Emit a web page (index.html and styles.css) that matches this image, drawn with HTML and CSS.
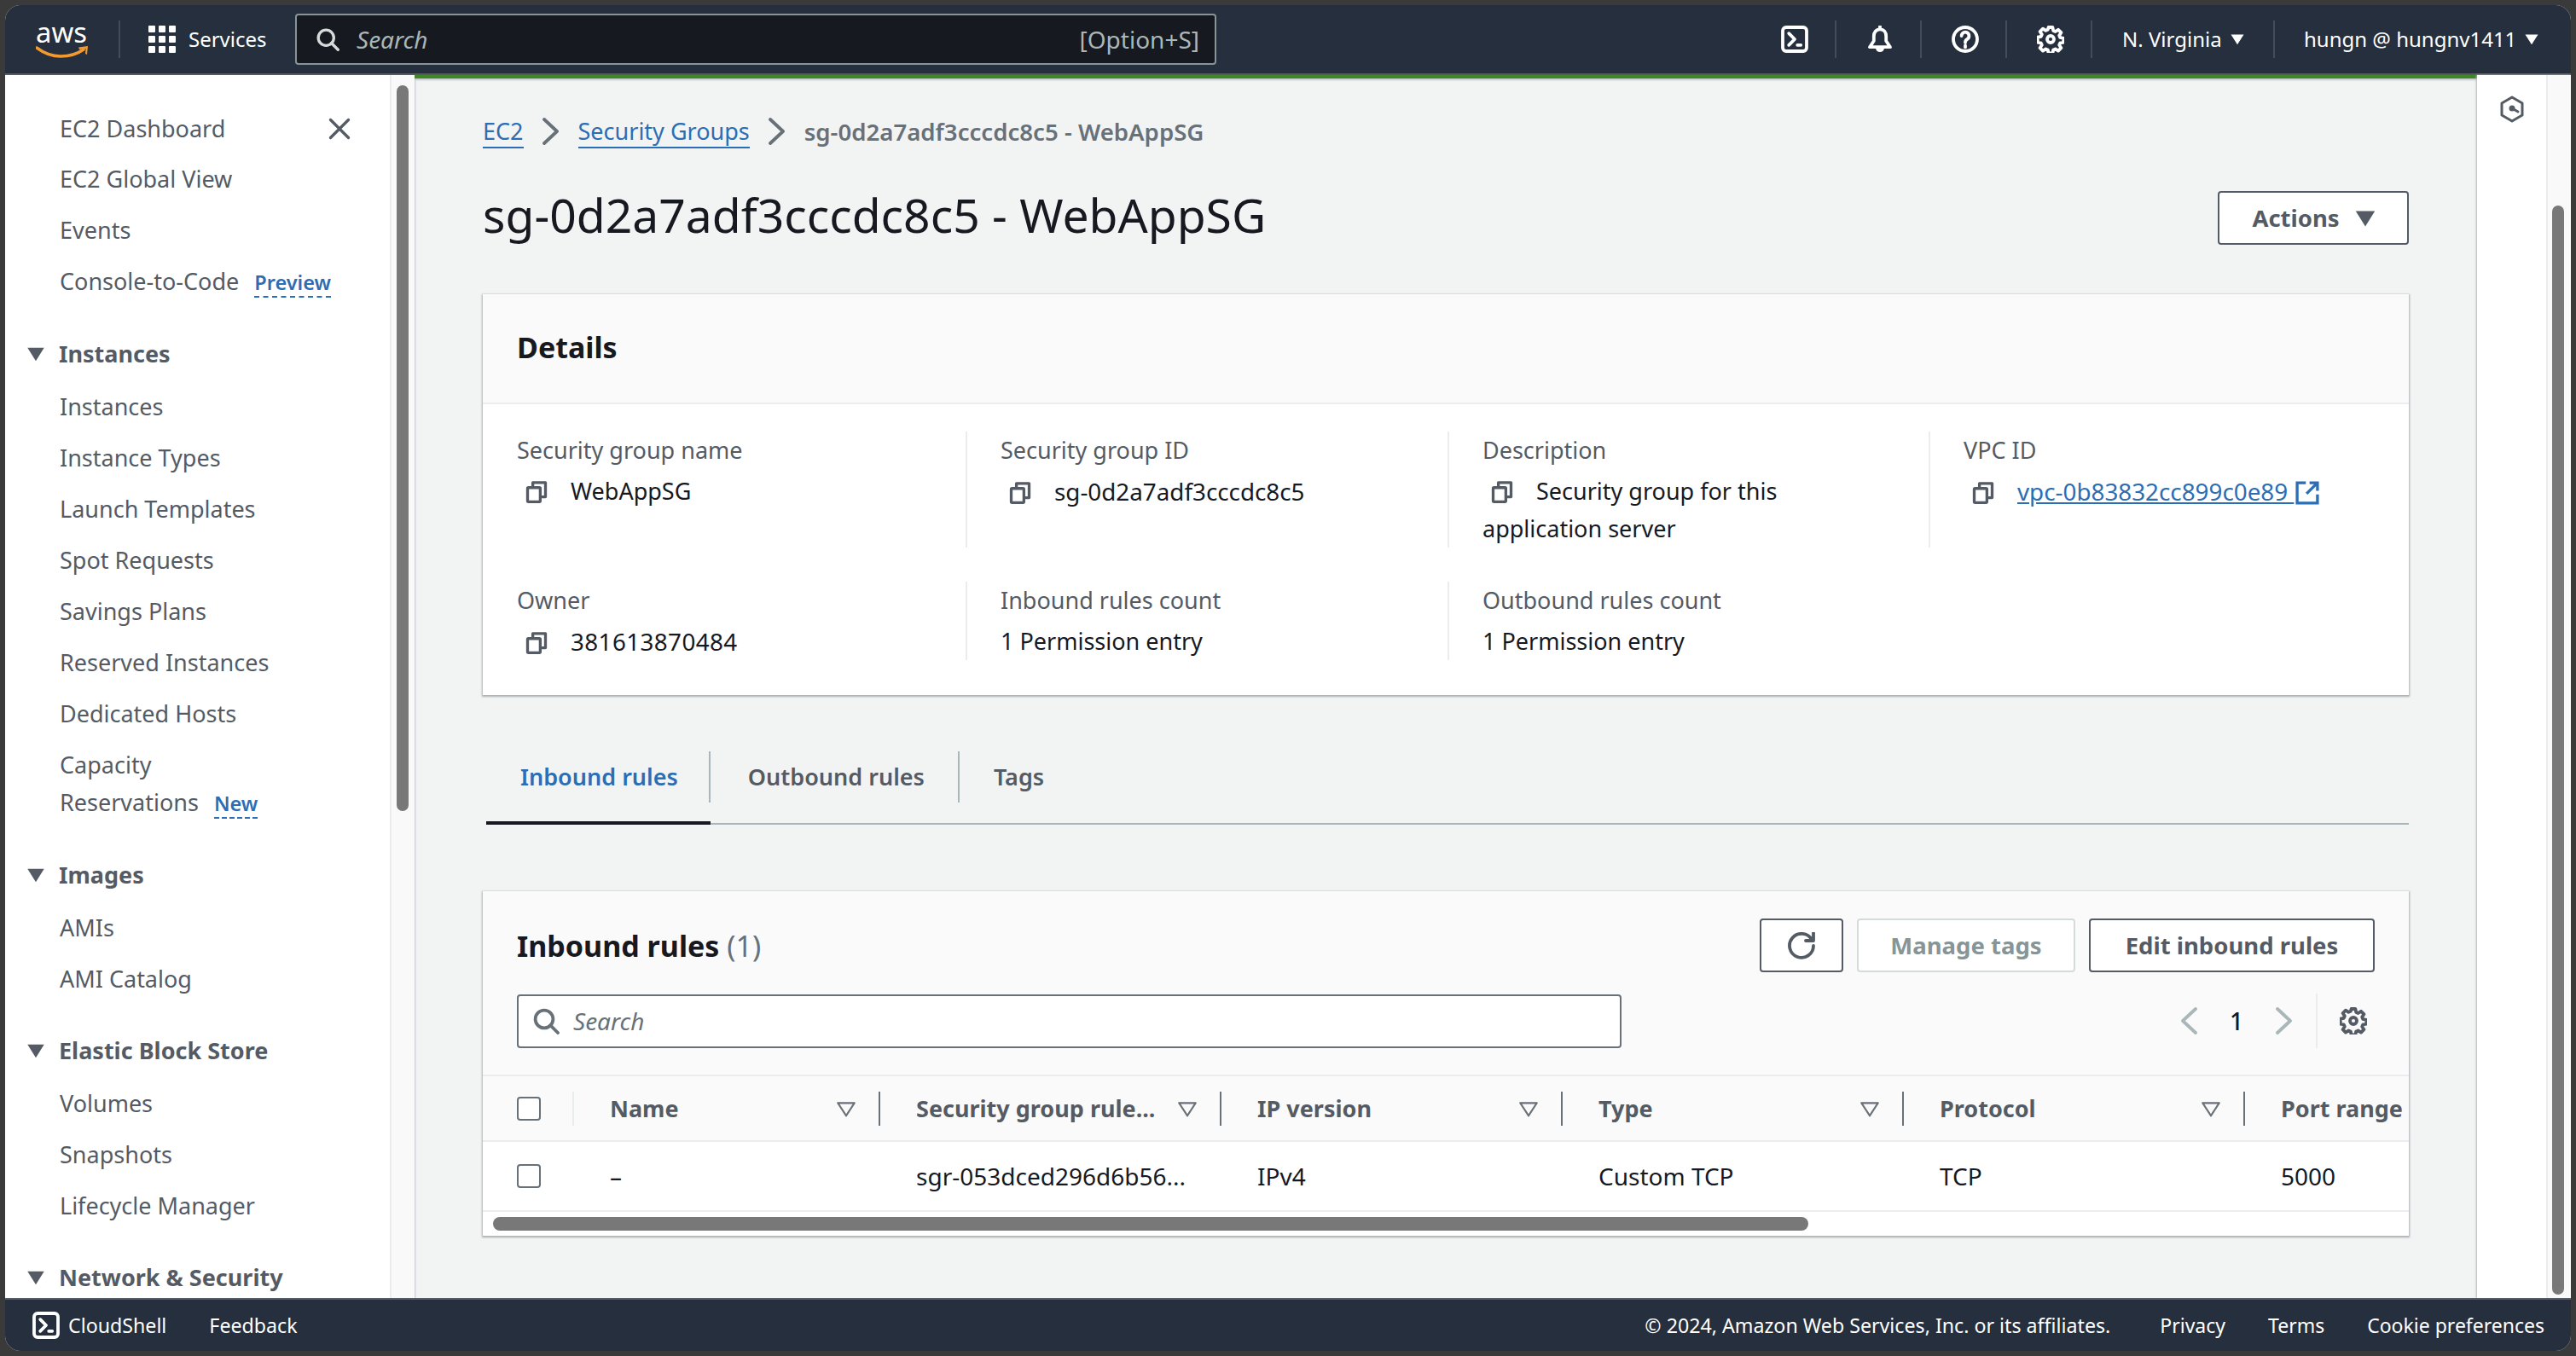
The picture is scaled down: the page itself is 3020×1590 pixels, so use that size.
FILE: index.html
```html
<!DOCTYPE html>
<html lang="en">
<head>
    <meta charset="UTF-8">
    <title>sg-0d2a7adf3cccdc8c5 - WebAppSG</title>
    <link rel="stylesheet" href="styles.css">
</head>
<body>
<svg class="icon-defs" width="0" height="0">
    <symbol id="i-search" viewBox="0 0 16 16"><circle cx="7" cy="7" r="5.2"/><path d="M15 15l-4.400-4.400"/></symbol>
    <symbol id="i-copy" viewBox="0 0 16 16"><rect x="2" y="5" width="8.500" height="9.500" rx=".6"/><path d="M5.500 4.500V1.600h8.500v9.600h-3"/></symbol>
    <symbol id="i-shell" viewBox="0 0 16 16"><rect x="1" y="1" width="14" height="14" rx="2"/><path d="M4.600 4.600L8 8l-3.400 3.400M9.600 11.400h2"/></symbol>
    <symbol id="i-gear" viewBox="0 0 16 16"><path d="M6.800 1h2.400l.4 2 1.200.5 1.700-1.100 1.700 1.700-1.100 1.700.5 1.200 2 .4v2.400l-2 .4-.5 1.200 1.100 1.700-1.700 1.700-1.700-1.100-1.200.5-.4 2H6.800l-.4-2-1.200-.5-1.700 1.100-1.700-1.700 1.100-1.700-.5-1.200-2-.4V6.800l2-.4.5-1.200-1.100-1.700 1.700-1.700 1.700 1.100 1.200-.5z"/><circle cx="8" cy="8" r="2"/></symbol>
    <symbol id="i-caret" viewBox="0 0 16 16"><path class="solid" d="M2 3.500h12L8 13z"/></symbol>
    <symbol id="i-filter" viewBox="0 0 16 16"><path d="M1.500 3.500h13L8 13.500z"/></symbol>
    <symbol id="i-right" viewBox="0 0 16 16"><path d="M4 1l7.500 7L4 15"/></symbol>
    <symbol id="i-left" viewBox="0 0 16 16"><path d="M12 1L4.500 8l7.500 7"/></symbol>
</svg>

<div class="app">
    <header class="topbar">
        <svg class="aws-logo" viewBox="0 -20 62 60" width="62" height="60">
            <text x="0" y="20" textLength="60" lengthAdjust="spacingAndGlyphs" class="aws-text">aws</text>
            <path class="aws-smile" d="M1 26c8 6 18 10 28 10 11 0 20-3 27-8"/>
            <path class="aws-arrow" d="M50 25.500l11-1.500-1 10-2-1 .5-6-7.500 1z"/>
        </svg>
        <span class="top-sep sep-logo"></span>
        <div class="services">
            <div class="grid-dots">
                <i></i><i></i><i></i><i></i><i></i><i></i><i></i><i></i><i></i>
            </div>
            <span>Services</span>
        </div>
        <div class="top-search">
            <svg class="ico ico-top-search"><use href="#i-search"/></svg>
            <span class="top-search-text">Search</span>
            <span class="top-search-key">[Option+S]</span>
        </div>
        <div class="top-right">
            <div class="top-btn"><svg class="ico ico-32"><use href="#i-shell"/></svg></div>
            <div class="top-btn">
                <svg class="ico ico-32" viewBox="0 0 16 16"><path d="M8 2.200c-2.300 0-3.600 1.800-3.600 4V9L2 12.600h12L11.600 9V6.200c0-2.200-1.300-4-3.600-4zM8 .6v1.600M6.400 12.800c0 2.400 3.200 2.400 3.200 0"/></svg>
            </div>
            <div class="top-btn">
                <svg class="ico ico-32" viewBox="0 0 16 16"><circle cx="8" cy="8" r="7"/><path d="M5.800 6a2.200 2.200 0 1 1 3.400 1.900c-.8.500-1.200 1-1.200 1.800v.3M8 11.700v1"/></svg>
            </div>
            <div class="top-btn"><svg class="ico ico-32"><use href="#i-gear"/></svg></div>
            <div class="top-menu menu-region">N. Virginia <svg class="ico ico-caret"><use href="#i-caret"/></svg></div>
            <div class="top-menu menu-user">hungn @ hungnv1411 <svg class="ico ico-caret"><use href="#i-caret"/></svg></div>
        </div>
    </header>

    <div class="middle">
        <aside class="sidebar">
            <nav class="side-nav">
                <div class="side-top">
                    <a class="side-item">EC2 Dashboard</a>
                    <svg class="ico side-close" viewBox="0 0 16 16"><path d="M2 2l12 12M14 2L2 14"/></svg>
                </div>
                <a class="side-item">EC2 Global View</a>
                <a class="side-item">Events</a>
                <a class="side-item">Console-to-Code <span class="side-badge">Preview</span></a>

                <div class="side-head"><svg class="ico ico-side"><use href="#i-caret"/></svg>Instances</div>
                <a class="side-item">Instances</a>
                <a class="side-item">Instance Types</a>
                <a class="side-item">Launch Templates</a>
                <a class="side-item">Spot Requests</a>
                <a class="side-item">Savings Plans</a>
                <a class="side-item">Reserved Instances</a>
                <a class="side-item">Dedicated Hosts</a>
                <a class="side-item">Capacity<br>Reservations <span class="side-badge">New</span></a>

                <div class="side-head"><svg class="ico ico-side"><use href="#i-caret"/></svg>Images</div>
                <a class="side-item">AMIs</a>
                <a class="side-item">AMI Catalog</a>

                <div class="side-head"><svg class="ico ico-side"><use href="#i-caret"/></svg>Elastic Block Store</div>
                <a class="side-item">Volumes</a>
                <a class="side-item">Snapshots</a>
                <a class="side-item">Lifecycle Manager</a>

                <div class="side-head"><svg class="ico ico-side"><use href="#i-caret"/></svg>Network &amp; Security</div>
            </nav>
            <div class="scroll-track side-track"><div class="scroll-thumb side-thumb"></div></div>
        </aside>

        <main class="content">
            <div class="breadcrumbs">
                <a class="crumb">EC2</a>
                <svg class="ico ico-crumb"><use href="#i-right"/></svg>
                <a class="crumb">Security Groups</a>
                <svg class="ico ico-crumb"><use href="#i-right"/></svg>
                <span class="crumb-current">sg-0d2a7adf3cccdc8c5 - WebAppSG</span>
            </div>

            <div class="title-row">
                <h1>sg-0d2a7adf3cccdc8c5 - WebAppSG</h1>
                <button class="btn btn-actions">Actions <svg class="ico ico-btn-caret"><use href="#i-caret"/></svg></button>
            </div>

            <section class="card">
                <div class="card-head details-head"><h2>Details</h2></div>
                <div class="details">
                    <div class="cell">
                        <div class="label">Security group name</div>
                        <div class="value"><svg class="ico ico-copy"><use href="#i-copy"/></svg>WebAppSG</div>
                    </div>
                    <div class="cell">
                        <div class="label">Security group ID</div>
                        <div class="value value-id"><svg class="ico ico-copy"><use href="#i-copy"/></svg>sg-0d2a7adf3cccdc8c5</div>
                    </div>
                    <div class="cell">
                        <div class="label">Description</div>
                        <div class="value"><svg class="ico ico-copy"><use href="#i-copy"/></svg>Security group for this<br>application server</div>
                    </div>
                    <div class="cell">
                        <div class="label">VPC ID</div>
                        <div class="value value-id"><svg class="ico ico-copy"><use href="#i-copy"/></svg><a class="link">vpc-0b83832cc899c0e89 </a><svg class="ico ico-ext" viewBox="0 0 16 16"><path d="M7 1.200H1.200v13.600h13.600V9M9.500 1.200h5.300v5.300M14.500 1.500L7.500 8.500"/></svg></div>
                    </div>
                    <div class="cell">
                        <div class="label">Owner</div>
                        <div class="value value-id value-owner"><svg class="ico ico-copy"><use href="#i-copy"/></svg>381613870484</div>
                    </div>
                    <div class="cell">
                        <div class="label">Inbound rules count</div>
                        <div class="value">1 Permission entry</div>
                    </div>
                    <div class="cell">
                        <div class="label">Outbound rules count</div>
                        <div class="value">1 Permission entry</div>
                    </div>
                </div>
            </section>

            <div class="tabs">
                <div class="tab tab-active"><span>Inbound rules</span></div>
                <div class="tab tab-mid"><span>Outbound rules</span></div>
                <div class="tab tab-last"><span>Tags</span></div>
            </div>

            <section class="card rules">
                <div class="card-head rules-head">
                    <div class="rules-title">
                        <h2>Inbound rules <span class="count">(1)</span></h2>
                        <div class="rules-actions">
                            <button class="btn btn-refresh"><svg class="ico ico-32" viewBox="0 0 16 16"><path d="M10.500 5h4.500V.5"/><path d="M15 8a7 7 0 1 1-.9-3.500"/></svg></button>
                            <button class="btn btn-disabled">Manage tags</button>
                            <button class="btn btn-edit">Edit inbound rules</button>
                        </div>
                    </div>
                    <div class="rules-tools">
                        <div class="filter">
                            <svg class="ico ico-32"><use href="#i-search"/></svg>
                            <span>Search</span>
                        </div>
                        <div class="pager">
                            <svg class="ico ico-page"><use href="#i-left"/></svg>
                            <span class="page-num">1</span>
                            <svg class="ico ico-page"><use href="#i-right"/></svg>
                        </div>
                        <div class="pager-gear"><svg class="ico ico-32"><use href="#i-gear"/></svg></div>
                    </div>
                </div>
                <div class="table-row table-head">
                    <div class="col-check"><span class="checkbox"></span></div>
                    <div class="th">Name<svg class="ico ico-filter"><use href="#i-filter"/></svg></div>
                    <div class="th">Security group rule...<svg class="ico ico-filter"><use href="#i-filter"/></svg></div>
                    <div class="th">IP version<svg class="ico ico-filter"><use href="#i-filter"/></svg></div>
                    <div class="th">Type<svg class="ico ico-filter"><use href="#i-filter"/></svg></div>
                    <div class="th">Protocol<svg class="ico ico-filter"><use href="#i-filter"/></svg></div>
                    <div class="th th-last">Port range</div>
                </div>
                <div class="table-row table-data">
                    <div class="col-check col-check-data"><span class="checkbox"></span></div>
                    <div class="td">–</div>
                    <div class="td">sgr-053dced296d6b56...</div>
                    <div class="td">IPv4</div>
                    <div class="td">Custom TCP</div>
                    <div class="td">TCP</div>
                    <div class="td">5000</div>
                </div>
                <div class="table-scroll"><div class="scroll-thumb table-thumb"></div></div>
            </section>
        </main>

        <aside class="rail">
            <div class="rail-panel">
                <svg class="ico rail-icon" viewBox="0 0 30 32"><path d="M15 2l12 7v14l-12 7-12-7V9z"/><path d="M15 15l7 4"/><circle class="solid" cx="15" cy="15" r="3.500"/></svg>
            </div>
            <div class="scroll-track rail-track"><div class="scroll-thumb rail-thumb"></div></div>
        </aside>
    </div>

    <footer class="footer">
        <svg class="ico ico-32 foot-shell"><use href="#i-shell"/></svg>
        <span class="foot-cloud">CloudShell</span>
        <span class="foot-feedback">Feedback</span>
        <span class="foot-copy">© 2024, Amazon Web Services, Inc. or its affiliates.</span>
        <span class="foot-link">Privacy</span>
        <span class="foot-link">Terms</span>
        <span class="foot-link">Cookie preferences</span>
    </footer>
</div>
</body>
</html>
```

FILE: styles.css
```css
* {
    box-sizing: border-box;
}
html, body {
    height: 100%;
}
body {
    margin: 0;
    padding: 6px;
    background: #3a3a3a;
    overflow: hidden;
    font-family: "Noto Sans", sans-serif;
    font-size: 27px;
    line-height: 44px;
    color: #16191f;
}
.icon-defs {
    position: absolute;
}
.app {
    height: 1578px;
    display: flex;
    flex-direction: column;
    border-radius: 18px;
    overflow: hidden;
    background: #fff;
}

/* icons */
.ico {
    flex: none;
    fill: none;
    stroke: currentColor;
    stroke-width: 1.900px;
    stroke-linecap: round;
    stroke-linejoin: round;
}
.solid {
    fill: currentColor;
    stroke: none;
}
.ico-32 {
    width: 32px;
    height: 32px;
}

/* top bar */
.topbar {
    flex: none;
    height: 82px;
    display: flex;
    align-items: center;
    padding-left: 36px;
    background: #252f3e;
    border-bottom: 2px solid #545b64;
    color: #fff;
    font-size: 24px;
}
.aws-logo {
    flex: none;
    margin-top: -12px;
}
.aws-text {
    fill: #fff;
    font-family: "Noto Sans", sans-serif;
    font-size: 33px;
}
.aws-smile {
    fill: none;
    stroke: #f29a2e;
    stroke-width: 3.500px;
    stroke-linecap: round;
}
.aws-arrow {
    fill: #f29a2e;
}
.top-sep {
    width: 2px;
    height: 44px;
    background: #414d5c;
}
.sep-logo {
    margin-left: 35px;
}
.services {
    display: flex;
    align-items: center;
    gap: 15px;
    margin-left: 33px;
    width: 172px;
}
.grid-dots {
    display: grid;
    grid-template-columns: repeat(3, 8px);
    grid-auto-rows: 8px;
    gap: 4px;
}
.grid-dots i {
    background: #fff;
    border-radius: 1px;
}
.top-search {
    width: 1080px;
    height: 60px;
    display: flex;
    align-items: center;
    padding: 0 18px 0 22px;
    background: #16191f;
    border: 2px solid #879596;
    border-radius: 4px;
    color: #aab7b8;
    font-size: 28px;
}
.ico-top-search {
    width: 28px;
    height: 30px;
    color: #d5dbdb;
}
.top-search-text {
    margin-left: 20px;
    font-style: italic;
    flex: 1;
}
.top-right {
    margin-left: auto;
    display: flex;
    align-items: center;
    height: 100%;
}
.top-btn {
    width: 100px;
    height: 44px;
    padding-left: 3px;
    display: flex;
    align-items: center;
    justify-content: center;
    border-right: 2px solid #414d5c;
}
.top-menu {
    display: flex;
    align-items: center;
    gap: 8px;
    height: 44px;
    white-space: nowrap;
}
.menu-region {
    width: 214px;
    padding-left: 35px;
    border-right: 2px solid #414d5c;
}
.menu-user {
    width: 347px;
    padding-left: 34px;
}
.ico-caret {
    width: 20px;
    height: 20px;
}

/* sidebar */
.middle {
    flex: 1;
    min-height: 0;
    display: flex;
}
.sidebar {
    flex: none;
    width: 480px;
    display: flex;
    background: #fff;
}
.side-nav {
    flex: none;
    width: 451px;
    padding-top: 33px;
    color: #545b64;
    overflow: hidden;
}
.side-top {
    display: flex;
    align-items: center;
    justify-content: space-between;
    padding-right: 45px;
    margin-bottom: -1px;
}
.side-close {
    width: 28px;
    height: 28px;
    color: #545b64;
}
.side-item {
    display: block;
    padding: 8px 0 8px 64px;
    white-space: nowrap;
}
.side-badge {
    margin-left: 11px;
    font-size: 23.500px;
    font-weight: 600;
    color: #2b6eb5;
    border-bottom: 2px dashed #2b6eb5;
}
.side-head {
    display: flex;
    align-items: center;
    height: 60px;
    margin: 24px 0 2px;
    padding-left: 23px;
    font-weight: 700;
}
.ico-side {
    width: 26px;
    height: 26px;
    margin-right: 14px;
}
.scroll-track {
    flex: none;
    width: 29px;
    background: #f9f9f9;
    border-left: 2px solid #eaeded;
}
.scroll-thumb {
    background: #787878;
    border-radius: 8px;
}
.side-thumb {
    width: 14px;
    height: 851px;
    margin: 12px 0 0 6px;
}

/* main */
.content {
    flex: 1;
    min-width: 0;
    padding: 40px 80px 0;
    background: #f2f3f3;
    border-top: 4px solid #3f8624;
    box-shadow: inset 2px 3px 2px -1px #c3c8cc;
    overflow: hidden;
}
.breadcrumbs {
    display: flex;
    align-items: center;
    height: 44px;
}
.crumb {
    color: #2b6eb5;
    line-height: 36px;
    border-bottom: 2px solid #2b6eb5;
    margin-top: 2px;
}
.ico-crumb {
    width: 32px;
    height: 32px;
    margin: 0 16px;
    color: #687078;
}
.crumb-current {
    font-size: 27.600px;
    font-weight: 600;
    color: #687078;
}
.title-row {
    display: flex;
    align-items: center;
    justify-content: space-between;
    margin-top: 48px;
    height: 63px;
}
h1 {
    margin: 0;
    padding-bottom: 8px;
    font-size: 55.200px;
    line-height: 63px;
    font-weight: 400;
}
h2 {
    margin: 0;
    font-size: 34px;
    line-height: 48px;
    font-weight: 700;
}
.btn {
    height: 63px;
    padding: 0;
    font-family: inherit;
    font-size: 27.500px;
    font-weight: 700;
    color: #545b64;
    background: #fff;
    border: 2px solid #545b64;
    border-radius: 4px;
    display: flex;
    align-items: center;
    justify-content: center;
}
.btn-actions {
    width: 224px;
    gap: 15px;
    padding-left: 4px;
}
.ico-btn-caret {
    width: 30px;
    height: 30px;
}
.card {
    margin-top: 58px;
    background: #fff;
    box-shadow: 0 1px 2px 1px rgba(0, 28, 36, .3);
}
.card-head {
    background: #fafafa;
}
.details-head {
    height: 129px;
    padding: 38px 40px 0;
    border-bottom: 2px solid #eaeded;
}
.details {
    display: grid;
    grid-template-columns: 526px 565px 564px 1fr;
    row-gap: 40px;
    padding: 32px 40px 41px;
}
.cell + .cell {
    padding-left: 39px;
    border-left: 2px solid #eaeded;
}
.cell:nth-child(5) {
    padding-left: 0;
    border-left: 0;
}
.label {
    color: #545b64;
    margin-bottom: 4px;
}
.value-id {
    font-size: 27.800px;
}
.value-owner {
    letter-spacing: .4px;
}
.ico-copy {
    width: 28px;
    height: 28px;
    margin: 0 26px 0 9px;
    color: #545b64;
    vertical-align: -5px;
}
.link {
    color: #2b6eb5;
    text-decoration: underline;
}
.ico-ext {
    width: 28px;
    height: 28px;
    margin-left: 2px;
    color: #2b6eb5;
    vertical-align: -5px;
    stroke-linecap: butt;
    stroke-linejoin: miter;
}
.tabs {
    display: flex;
    margin: 66px 0 0 4px;
    border-bottom: 2px solid #aab7b8;
}
.tab {
    padding-bottom: 22px;
    border-bottom: 4px solid transparent;
    margin-bottom: -2px;
    font-weight: 600;
    color: #545b64;
}
.tab span {
    display: block;
    height: 60px;
    line-height: 60px;
    padding: 0 40px;
    border-right: 2px solid #aab7b8;
}
.tab-active span {
    padding-right: 36px;
}
.tab-mid span {
    padding: 0 39px 0 44px;
}
.tab-last span {
    border-right: 0;
}
.tab-active {
    color: #2b6eb5;
    border-bottom-color: #16191f;
}

/* rules table */
.rules {
    margin-top: 78px;
}
.rules-head {
    padding: 32px 40px 0;
    height: 217px;
    border-bottom: 2px solid #eaeded;
}
.rules-title {
    display: flex;
    align-items: center;
    justify-content: space-between;
}
.count {
    font-weight: 400;
    color: #687078;
}
.rules-actions {
    display: flex;
    gap: 16px;
}
.btn-refresh {
    width: 98px;
}
.btn-disabled {
    width: 256px;
    color: #879596;
    border-color: #d5dbdb;
}
.btn-edit {
    width: 335px;
}
.rules-tools {
    display: flex;
    align-items: center;
    margin-top: 25px;
}
.filter {
    width: 1295px;
    height: 63px;
    display: flex;
    align-items: center;
    gap: 16px;
    padding-left: 16px;
    background: #fff;
    border: 2px solid #687078;
    border-radius: 4px;
    font-size: 28px;
    font-style: italic;
    color: #687078;
}
.pager {
    display: flex;
    align-items: center;
    justify-content: space-between;
    width: 144px;
    margin-left: auto;
    margin-right: 21px;
}
.ico-page {
    width: 32px;
    height: 32px;
    color: #aab7b8;
}
.page-num {
    font-size: 28px;
    font-weight: 500;
}
.pager-gear {
    width: 69px;
    height: 64px;
    padding-left: 26px;
    display: flex;
    align-items: center;
    color: #545b64;
    border-left: 2px solid #eaeded;
}
.table-row {
    display: grid;
    grid-template-columns: 107px 359px 400px 400px 400px 400px 1fr;
}
.table-head {
    height: 77px;
    background: #fafafa;
    border-bottom: 2px solid #eaeded;
    align-items: center;
    font-weight: 700;
    color: #545b64;
}
.col-check {
    height: 40px;
    padding-left: 40px;
    display: flex;
    align-items: center;
    border-right: 2px solid #eaeded;
}
.col-check-data {
    border-right: 0;
}
.checkbox {
    width: 28px;
    height: 28px;
    background: #fff;
    border: 2px solid #687078;
    border-radius: 4px;
}
.th {
    height: 40px;
    line-height: 40px;
    padding: 0 26px 0 42px;
    display: flex;
    align-items: center;
    justify-content: space-between;
    border-right: 2px solid #687078;
    white-space: nowrap;
}
.th-last {
    border-right: 0;
    padding-right: 0;
}
.ico-filter {
    width: 24px;
    height: 24px;
    stroke-width: 1.500px;
    color: #687078;
}
.table-data {
    height: 82px;
    align-items: center;
    border-bottom: 2px solid #eaeded;
    font-size: 28px;
}
.td {
    padding-left: 42px;
}
.table-scroll {
    height: 28px;
    padding: 6px 12px;
}
.table-thumb {
    width: 1542px;
    height: 16px;
}

/* right rail */
.rail {
    flex: none;
    width: 110px;
    display: flex;
    box-shadow: -1px 0 2px #aab7b8;
}
.rail-panel {
    width: 81px;
    padding-top: 24px;
    display: flex;
    justify-content: center;
    align-items: flex-start;
}
.rail-icon {
    width: 30px;
    height: 32px;
    color: #545b64;
    stroke-width: 3px;
}
.rail-track {
    flex: none;
}
.rail-thumb {
    width: 14px;
    height: 1277px;
    margin: 153px 0 0 5px;
}

/* footer */
.footer {
    flex: none;
    height: 62px;
    display: flex;
    align-items: center;
    padding: 0 31px 0 32px;
    background: #252f3e;
    border-top: 2px solid #545b64;
    color: #fff;
    font-size: 23.200px;
    white-space: nowrap;
}
.foot-cloud {
    margin-left: 10px;
}
.foot-feedback {
    margin-left: 50px;
}
.foot-copy {
    margin-left: auto;
    margin-right: 8px;
}
.foot-link {
    margin-left: 50px;
    font-size: 23px;
}
```
